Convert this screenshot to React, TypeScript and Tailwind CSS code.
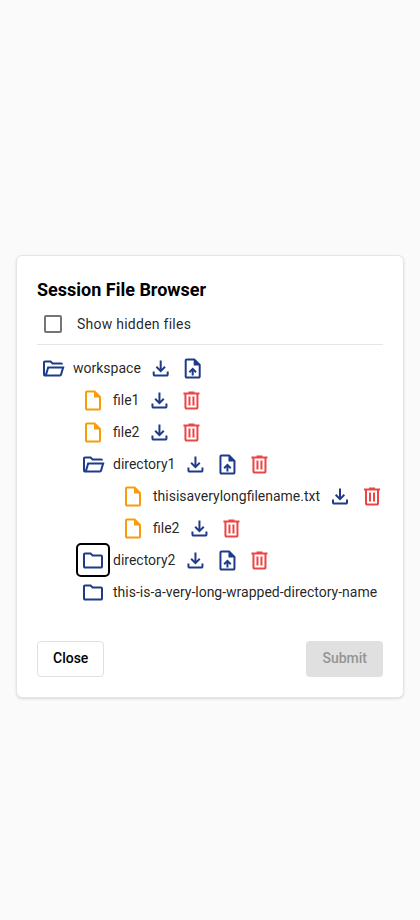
import React from "react";

const PATHS = {
  download:
    "M480-320 280-520l56-58 104 104v-326h80v326l104-104 56 58-200 200ZM240-160q-33 0-56.5-23.5T160-240v-120h80v120h480v-120h80v120q0 33-23.5 56.5T720-160H240Z",
  upload:
    "M440-200h80v-167l64 64 56-57-160-160-160 160 57 56 63-63v167ZM240-80q-33 0-56.5-23.5T160-160v-640q0-33 23.5-56.5T240-880h320l240 240v480q0 33-23.5 56.5T720-80H240Zm280-520v-200H240v640h480v-440H520Z",
  remove:
    "M280-120q-33 0-56.5-23.5T200-200v-520h-40v-80h200v-40h240v40h200v80h-40v520q0 33-23.5 56.5T680-120H280Zm400-600H280v520h400v-520ZM360-280h80v-360h-80v360Zm160 0h80v-360h-80v360Z",
  file:
    "M240-80q-33 0-56.5-23.5T160-160v-640q0-33 23.5-56.5T240-880h320l240 240v480q0 33-23.5 56.5T720-80H240Zm280-520v-200H240v640h480v-440H520Z",
  folder:
    "M160-160q-33 0-56.5-23.5T80-240v-480q0-33 23.5-56.5T160-800h240l80 80h320q33 0 56.5 23.5T880-640v400q0 33-23.5 56.5T800-160H160Zm0-80h640v-400H447l-80-80H160v480Z",
  folderOpen:
    "M160-160q-33 0-56.5-23.5T80-240v-480q0-33 23.5-56.5T160-800h240l80 80h320q33 0 56.5 23.5T880-640H447l-80-80H160v480l96-320h684L837-217q-8 26-29.5 41.5T760-160H160Zm84-80h516l72-240H316l-72 240Z",
};

type IconName = keyof typeof PATHS;

const COLORS: Record<IconName, string> = {
  download: "text-[#1e3a8a]",
  upload: "text-[#1e3a8a]",
  remove: "text-[#ef4444]",
  file: "text-[#f59e0b]",
  folder: "text-[#1e3a8a]",
  folderOpen: "text-[#1e3a8a]",
};

// `nudge` moves the glyph right, in icon units (40 units = 1px).
function IconButton({ name, focused = false, nudge = 0 }: { name: IconName; focused?: boolean; nudge?: number }) {
  return (
    <button
      type="button"
      aria-label={name}
      className={`flex size-8 shrink-0 items-center justify-center rounded ${COLORS[name]} ${
        focused ? "outline-2 -outline-offset-1 outline-black" : ""
      }`}
    >
      <svg viewBox={`${-nudge} -980 960 960`} className="size-6 shrink-0 overflow-visible fill-current">
        <path d={PATHS[name]} />
      </svg>
    </button>
  );
}

type Node = {
  name: string;
  icon: IconName;
  actions: IconName[];
  nudge?: number;
  focused?: boolean;
  children?: Node[];
};

const TREE: Node[] = [
  {
    name: "workspace",
    icon: "folderOpen",
    actions: ["download", "upload"],
    nudge: -12,
    children: [
      { name: "file1", icon: "file", actions: ["download", "remove"], nudge: 18 },
      { name: "file2", icon: "file", actions: ["download", "remove"], nudge: 18 },
      {
        name: "directory1",
        icon: "folderOpen",
        actions: ["download", "upload", "remove"],
        nudge: 18,
        children: [
          { name: "thisisaverylongfilename.txt", icon: "file", actions: ["download", "remove"] },
          { name: "file2", icon: "file", actions: ["download", "remove"], nudge: 18 },
        ],
      },
      { name: "directory2", icon: "folder", actions: ["download", "upload", "remove"], nudge: 18, focused: true },
      { name: "this-is-a-very-long-wrapped-directory-name", icon: "folder", actions: [] },
    ],
  },
];

function Tree({ nodes }: { nodes: Node[] }) {
  return (
    <ul>
      {nodes.map((node, i) => (
        <li key={i}>
          <div className="flex h-8 items-center whitespace-nowrap">
            <IconButton name={node.icon} focused={node.focused} />
            <span className="mx-1">{node.name}</span>
            {node.actions.map((a) => (
              <IconButton key={a} name={a} nudge={node.nudge} />
            ))}
          </div>
          {node.children && (
            <div className="pl-10">
              <Tree nodes={node.children} />
            </div>
          )}
        </li>
      ))}
    </ul>
  );
}

export default function App() {
  return (
    <div className="flex h-[920px] flex-col bg-[#fafafa] px-4 pt-[255px] font-['Roboto',sans-serif] text-sm text-black/87">
      <div className="flex h-[443px] flex-col rounded-md border border-[#e5e5e5] bg-white px-5 pt-5 pb-5 shadow-sm">
        <h1 className="text-lg leading-7 font-bold text-black">Session File Browser</h1>
        <label className="flex h-[41px] items-center border-b border-[#e5e5e5] pb-px">
          <span className="ml-[7px] size-[18px] rounded-[2px] border-2 border-[#757575]" />
          <span className="ml-[15px] tracking-[0.25px]">Show hidden files</span>
        </label>
        <div className="pt-[7px]">
          <Tree nodes={TREE} />
        </div>
        <div className="mt-auto flex justify-between font-medium">
          <button type="button" className="h-9 rounded border border-[#e0e0e0] px-[15px] pb-0.5 text-black">
            Close
          </button>
          <button type="button" disabled className="h-9 rounded bg-[#e0e0e0] px-4 pb-0.5 text-[#949494]">
            Submit
          </button>
        </div>
      </div>
    </div>
  );
}
